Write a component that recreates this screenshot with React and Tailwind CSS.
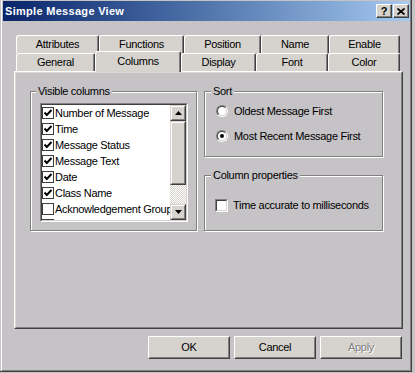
import React from "react";

const upperTabs = [
  { label: "Attributes", w: "w-[83px]" },
  { label: "Functions", w: "w-[85px]" },
  { label: "Position", w: "w-[77px]" },
  { label: "Name", w: "w-[68px]" },
  { label: "Enable", w: "w-[71px]" },
];

const lowerTabs = [
  { label: "General", w: "w-[79px]" },
  { label: "Columns", w: "w-[86px]", selected: true },
  { label: "Display", w: "w-[75px]" },
  { label: "Font", w: "w-[72px]" },
  { label: "Color", w: "w-[72px]" },
];

const columns = [
  { label: "Number of Message", checked: true },
  { label: "Time", checked: true },
  { label: "Message Status", checked: true },
  { label: "Message Text", checked: true },
  { label: "Date", checked: true },
  { label: "Class Name", checked: true },
  { label: "Acknowledgement Group", checked: false },
  { label: "Division Name", checked: false },
];

function Tab({ label, w, selected }) {
  if (selected) {
    return (
      <div
        className={`${w} relative z-10 -mt-[2px] h-[21px] flex items-center justify-center pb-[2px] bg-[#d6d3ce] border-l border-t border-r border-l-white border-t-white border-r-[#404040] rounded-tl-[3px] rounded-tr-[2px] shadow-[inset_-1px_0_0_#808080]`}
      >
        {label}
      </div>
    );
  }
  return (
    <div
      className={`${w} h-[18px] flex items-center justify-center bg-[#d6d3ce] border-l border-t border-r border-l-white border-t-white border-r-[#404040] rounded-tl-[3px] rounded-tr-[2px] shadow-[inset_-1px_0_0_#808080]`}
    >
      {label}
    </div>
  );
}

function ListCheck({ checked }) {
  return (
    <div className="w-[12px] h-[12px] shrink-0 border border-[#3c3c3c] bg-white flex items-center justify-center">
      {checked && (
        <svg width="10" height="10" viewBox="0 0 10 10">
          <polyline
            points="1.5,4.5 3.8,7 8.5,2"
            fill="none"
            stroke="#000"
            strokeWidth="1.9"
          />
        </svg>
      )}
    </div>
  );
}

function ScrollButton({ dir }) {
  return (
    <div className="w-[16px] h-[16px] shrink-0 bg-[#d6d3ce] border border-t-[#d6d3ce] border-l-[#d6d3ce] border-r-[#404040] border-b-[#404040]">
      <div className="w-full h-full border border-t-white border-l-white border-r-[#808080] border-b-[#808080] flex items-center justify-center">
        <svg width="7" height="4" viewBox="0 0 7 4">
          {dir === "up" ? (
            <polygon points="3.5,0 7,4 0,4" fill="#000" />
          ) : (
            <polygon points="0,0 7,0 3.5,4" fill="#000" />
          )}
        </svg>
      </div>
    </div>
  );
}

function Radio({ checked }) {
  return (
    <div className="w-[12px] h-[12px] shrink-0 rounded-full border border-t-[#808080] border-l-[#808080] border-b-white border-r-white">
      <div className="w-full h-full rounded-full border border-t-[#404040] border-l-[#404040] border-b-[#d6d3ce] border-r-[#d6d3ce] bg-white flex items-center justify-center">
        {checked && <div className="w-[4px] h-[4px] rounded-full bg-black" />}
      </div>
    </div>
  );
}

function Group({ label, labelLeft, className, children }) {
  return (
    <div
      className={`relative border border-[#808080] shadow-[inset_1px_1px_0_#fff,1px_1px_0_#fff] ${className}`}
    >
      <span
        className={`absolute ${labelLeft} -top-[8px] px-[2px] leading-[14px] bg-[#c6c3c6] whitespace-nowrap`}
      >
        {label}
      </span>
      {children}
    </div>
  );
}

function Button({ children, disabled }) {
  return (
    <div className="w-[82px] h-[23px] bg-[#d6d3ce] border border-t-white border-l-white border-r-[#404040] border-b-[#404040]">
      <div
        className={`w-full h-full flex items-center justify-center border border-t-[#d6d3ce] border-l-[#d6d3ce] border-r-[#808080] border-b-[#808080] ${
          disabled ? "text-[#808080] [text-shadow:1px_1px_0_#fff]" : "text-black"
        }`}
      >
        {children}
      </div>
    </div>
  );
}

export default function App() {
  return (
    <div className="w-[415px] h-[373px] bg-[#c6c3c6] overflow-hidden font-['Liberation_Sans',Arial,sans-serif] text-[11px] tracking-[-0.3px] text-black leading-none">
      <div className="w-[412px] h-[372px] border-r border-b border-[#404040] pl-[1px]">
        <div className="h-full border-l border-r border-b border-l-white border-r-[#808080] border-b-[#808080] pt-[1px] pl-[1px]">
          {/* Title bar */}
          <div className="w-[407px] h-[20px] flex items-center bg-linear-to-r from-[#0a246a] to-[#a6caf0] pl-[2px] pr-[1px]">
            <span className="text-white font-bold tracking-[0.3px] text-[11px]">
              Simple Message View
            </span>
            <div className="ml-auto flex gap-[1px]">
              <div className="w-[16px] h-[14px] bg-[#d6d3ce] border border-t-white border-l-white border-r-[#404040] border-b-[#404040] flex items-center justify-center shadow-[inset_-1px_-1px_0_#808080]">
                <span className="font-bold text-[11px] tracking-normal leading-none mt-[1px]">?</span>
              </div>
              <div className="w-[16px] h-[14px] bg-[#d6d3ce] border border-t-white border-l-white border-r-[#404040] border-b-[#404040] flex items-center justify-center shadow-[inset_-1px_-1px_0_#808080]">
                <svg width="8" height="7" viewBox="0 0 8 7">
                  <path d="M0.5 0.5 L7.5 6.5 M7.5 0.5 L0.5 6.5" stroke="#000" strokeWidth="1.7" />
                </svg>
              </div>
            </div>
          </div>

          {/* Body */}
          <div className="ml-[11px] w-[389px] mt-[14px]">
            {/* Tab rows */}
            <div className="flex pl-[2px] h-[18px]">
              {upperTabs.map((t) => (
                <Tab key={t.label} {...t} />
              ))}
            </div>
            <div className="flex items-start pl-[2px] h-[18px]">
              {lowerTabs.map((t) => (
                <Tab key={t.label} {...t} />
              ))}
            </div>

            {/* Panel */}
            <div className="h-[258px] border border-t-white border-l-white border-r-[#404040] border-b-[#404040]">
              <div className="h-full border border-t-[#dcd9d4] border-l-[#dcd9d4] border-r-[#808080] border-b-[#808080] flex items-start pl-[14px] pt-[18px]">
                {/* Visible columns */}
                <Group label="Visible columns" labelLeft="left-[5px]" className="w-[167px] h-[140px]">
                  <div className="ml-[9px] mt-[11px] w-[148px] h-[119px] border border-t-[#808080] border-l-[#808080] border-r-white border-b-white">
                    <div className="w-full h-full border border-t-[#404040] border-l-[#404040] border-r-[#d6d3ce] border-b-[#d6d3ce] bg-white flex">
                      <div className="w-[128px] h-full overflow-hidden">
                        {columns.map((c) => (
                          <div key={c.label} className="h-[16px] flex items-center whitespace-nowrap">
                            <ListCheck checked={c.checked} />
                            <span className="ml-[1px]">{c.label}</span>
                          </div>
                        ))}
                      </div>
                      <div className="w-[16px] h-full flex flex-col">
                        <ScrollButton dir="up" />
                        <div className="h-[64px] shrink-0 bg-[#d6d3ce] border border-t-[#d6d3ce] border-l-[#d6d3ce] border-r-[#404040] border-b-[#404040]">
                          <div className="w-full h-full border border-t-white border-l-white border-r-[#808080] border-b-[#808080]" />
                        </div>
                        <div className="flex-1 bg-[image:repeating-conic-gradient(#ffffff_0_25%,#d6d3ce_0_50%)] bg-[length:2px_2px]" />
                        <ScrollButton dir="down" />
                      </div>
                    </div>
                  </div>
                </Group>

                {/* Right column */}
                <div className="ml-[7px] flex flex-col">
                  <Group label="Sort" labelLeft="left-[6px]" className="w-[179px] h-[66px]">
                    <div className="ml-[11px] mt-[11px] flex flex-col gap-[9px]">
                      <div className="h-[16px] flex items-center">
                        <Radio checked={false} />
                        <span className="ml-[6px]">Oldest Message First</span>
                      </div>
                      <div className="h-[16px] flex items-center">
                        <Radio checked />
                        <span className="ml-[6px]">Most Recent Message First</span>
                      </div>
                    </div>
                  </Group>
                  <Group
                    label="Column properties"
                    labelLeft="left-[6px]"
                    className="w-[179px] h-[56px] mt-[18px]"
                  >
                    <div className="ml-[10px] mt-[21px] h-[16px] flex items-center">
                      <div className="w-[13px] h-[13px] shrink-0 border border-t-[#808080] border-l-[#808080] border-r-white border-b-white">
                        <div className="w-full h-full border border-t-[#404040] border-l-[#404040] border-r-[#d6d3ce] border-b-[#d6d3ce] bg-white" />
                      </div>
                      <span className="ml-[5px]">Time accurate to milliseconds</span>
                    </div>
                  </Group>
                </div>
              </div>
            </div>

            {/* Buttons */}
            <div className="mt-[7px] flex justify-end gap-[4px] pr-[1px]">
              <Button>OK</Button>
              <Button>Cancel</Button>
              <Button disabled>Apply</Button>
            </div>
          </div>
        </div>
      </div>
    </div>
  );
}
